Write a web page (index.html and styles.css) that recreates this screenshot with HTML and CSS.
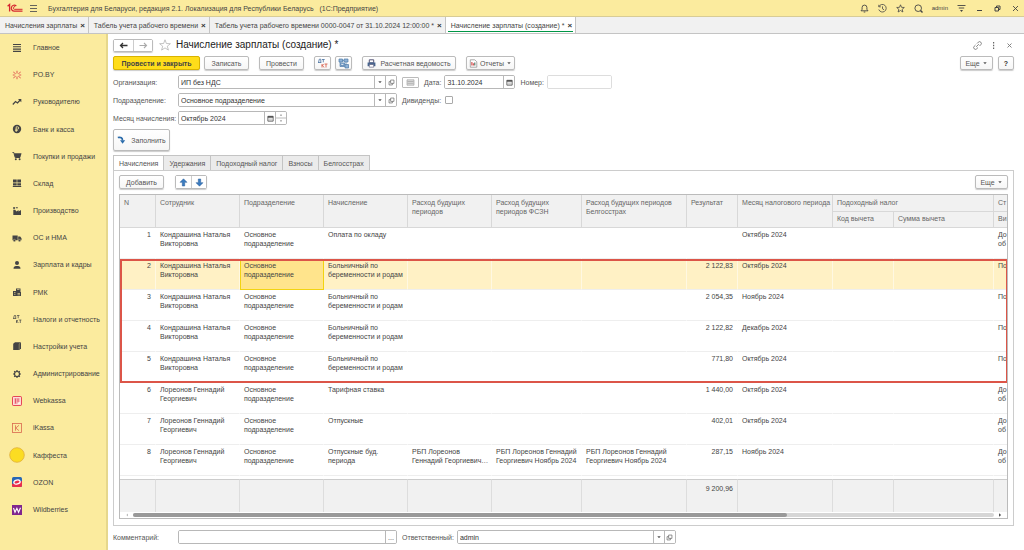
FILE: index.html
```html
<!DOCTYPE html>
<html lang="ru">
<head>
<meta charset="utf-8">
<title>Начисление зарплаты (создание) *</title>
<link rel="stylesheet" href="styles.css">
</head>
<body>
<svg class="sprite" aria-hidden="true">
  <symbol id="calendar" viewBox="0 0 8 8"><path d="M1 1.5h6v5.5H1z" fill="none" stroke="#555"/><path d="M1 1h6v2H1z" fill="#555"/><path d="M2 4.5h4M2 5.7h4" stroke="#999" stroke-width=".6"/></symbol>
  <symbol id="open" viewBox="0 0 8 8"><path d="M3 1.2h3.8V5H3zM3 3H1.2v3.8H5V5" fill="none" stroke="#666" stroke-width=".8"/></symbol>
  <symbol id="down" viewBox="0 0 6 6"><path d="M1.3 2.2h3.4L3 4.2z" fill="#555"/></symbol>
</svg>

<header class="titlebar">
  <svg class="logo" viewBox="0 0 16 10" fill="none" stroke="#d5262f"><path d="M.6 3.2 2.6 1.5V8.500" stroke-width="1.300"/><path d="M9.300 3A3 3 0 1 0 7.300 8.200H15.500" stroke-width="1.200"/><path d="M8 3.700A1.300 1.300 0 1 0 7.300 6.300H15.500" stroke-width="1"/></svg>
  <button class="bare" aria-label="Меню"><svg class="i9" viewBox="0 0 9 9"><path d="M1 1.500h7M1 4.500h7M1 7.500h7" stroke="#555" stroke-width=".9"/></svg></button>
  <span class="app-name">Бухгалтерия для Беларуси, редакция 2.1. Локализация для Республики Беларусь &nbsp; (1С:Предприятие)</span>
  <div class="sysicons">
    <button class="bare" aria-label="Уведомления"><svg class="i9" viewBox="0 0 9 9" fill="none" stroke="#444" stroke-width=".9"><path d="M1 6.800h7L6.900 5.300V3.500a2.400 2.400 0 0 0-4.800 0v1.800zM3.700 8h1.600"/></svg></button>
    <button class="bare" aria-label="История"><svg class="i9" viewBox="0 0 9 9" fill="none" stroke="#444" stroke-width=".8"><path d="M1 2.500A3.800 3.800 0 1 1 .8 5.500M.8.800v2h2M4.500 2.400v2.400L6 5.800"/></svg></button>
    <button class="bare" aria-label="Избранное"><svg class="i9" viewBox="0 0 9 9" fill="none" stroke="#444" stroke-width=".8"><path d="m4.500.800 1 2.500 2.800.200-2.100 1.800.700 2.700-2.400-1.500L2.100 8l.700-2.700L.700 3.500l2.800-.200z"/></svg></button>
    <button class="bare" aria-label="Поиск"><svg class="i9" viewBox="0 0 9 9" fill="none" stroke="#444" stroke-width=".9"><circle cx="4.200" cy="4.200" r="3.300"/><path d="m6.500 6.500 2 2" stroke-width="1.400"/></svg></button>
    <span class="user">admin</span>
    <button class="bare" aria-label="Настройки"><svg class="i9" viewBox="0 0 9 9"><path d="M.5 1.500h8M1.800 4h5.400" stroke="#444" stroke-width=".9"/><path d="M3 6h3L4.500 8z" fill="#444"/></svg></button>
    <button class="bare win" aria-label="Свернуть"><svg class="i7" viewBox="0 0 7 7"><path d="M1 5.500h5" stroke="#444"/></svg></button>
    <button class="bare win" aria-label="Развернуть"><svg class="i7" viewBox="0 0 7 7" fill="none" stroke="#444"><path d="M1 2.500h3.500V6H1zM2.500 2.500V1H6v3.500H4.500"/></svg></button>
    <button class="bare win" aria-label="Закрыть"><svg class="i7" viewBox="0 0 7 7"><path d="m1 1 5 5M6 1 1 6" stroke="#444" stroke-width=".9"/></svg></button>
  </div>
</header>

<nav class="windows">
  <a class="wtab" href="#">Начисления зарплаты<b>×</b></a>
  <a class="wtab" href="#">Табель учета рабочего времени<b>×</b></a>
  <a class="wtab" href="#">Табель учета рабочего времени 0000-0047 от 31.10.2024 12:00:00 *<b>×</b></a>
  <a class="wtab current" href="#">Начисление зарплаты (создание) *<b>×</b></a>
</nav>

<div class="workspace">
<nav class="sidebar">
  <a href="#"><svg viewBox="0 0 10 10"><path d="M1 1.500h8M1 3.800h8M1 6.100h8M1 8.400h8" stroke="#444" stroke-width="1.100"/></svg>Главное</a>
  <a href="#"><svg viewBox="0 0 10 10"><path d="M5 .8v2.700M5 6.500v2.700M1.300 2l2.400 1.800M8.700 2 6.300 3.800M1.300 8l2.400-1.800M8.700 8 6.300 6.200M.8 5h2M7.200 5h2" stroke="#dc4b4b" stroke-width=".9"/></svg>PO.BY</a>
  <a href="#"><svg viewBox="0 0 10 10"><path d="m.8 7.500 2.700-3 2 1.500 2.700-3" fill="none" stroke="#444" stroke-width="1.200"/><path d="M6 2h3.300v3.300z" fill="#444"/></svg>Руководителю</a>
  <a href="#"><svg viewBox="0 0 10 10"><circle cx="5" cy="5" r="4.200" fill="#444"/><path d="M4.200 8V2.800h1.300a1.200 1.200 0 0 1 0 2.400H3.200M3.200 6.500h2.500" fill="none" stroke="#fbeb9e" stroke-width=".8"/></svg>Банк и касса</a>
  <a href="#"><svg viewBox="0 0 10 10"><path d="M.5 1.500h1.300L3.200 6.500h5" fill="none" stroke="#444"/><path d="M2.200 2.200h7.300L8.500 6H3.200z" fill="#444"/><circle cx="3.800" cy="8.300" r="1" fill="#444"/><circle cx="7.600" cy="8.300" r="1" fill="#444"/></svg>Покупки и продажи</a>
  <a href="#"><svg viewBox="0 0 10 10" fill="#444"><path d="M1 1.500h3.700v3H1zM5.300 1.500H9v3H5.300zM1 5.200h3.700v2.300H1zM5.300 5.200H9v2.300H5.300zM.8 8h8.400v.900H.8z"/></svg>Склад</a>
  <a href="#"><svg viewBox="0 0 10 10" fill="#444"><path d="M1.300 9V3.800h1.800L4.500 5.500 6.500 4v1.500L9 4v5zM1.300 1h1.500v2H1.300zM3.800 1.200h2v1h-2z"/></svg>Производство</a>
  <a href="#"><svg viewBox="0 0 10 10" fill="#444"><path d="M.5 2.500h5.200v4.700H.5zM6.200 3.500h2L9.500 5.300v1.900H6.200z"/><circle cx="2.400" cy="7.500" r="1.200" stroke="#fbeb9e" stroke-width=".4"/><circle cx="7.500" cy="7.500" r="1.200" stroke="#fbeb9e" stroke-width=".4"/></svg>ОС и НМА</a>
  <a href="#"><svg viewBox="0 0 10 10" fill="#444"><circle cx="5" cy="3" r="2"/><path d="M1.500 8.800c0-2 1-2.800 2.500-2.800h2c1.500 0 2.500.800 2.500 2.800z"/></svg>Зарплата и кадры</a>
  <a href="#"><svg viewBox="0 0 10 10"><path d="M1 4h3.500v5H1zM4.500 5H9v4H4.500zM4 1.500h4.500V5H4z" fill="#444"/><path d="M5 2.500h2.500M2 5.500h1.500M2 7.300h1.500M5.500 6.500H8M5.500 7.800H8" stroke="#fbeb9e" stroke-width=".6"/></svg>РМК</a>
  <a href="#"><svg viewBox="0 0 10 10" fill="none" stroke="#444" stroke-width=".7"><path d="M1 4.500h3.200M1.500 4.500 2.300 1.500h1.400v3M5 1.500h2.500M6.200 1.500v2.800M4.500 6v3M4.500 7.500 6.200 6M5 7.200 6.300 9M7.200 6h2.200M8.300 6v3"/></svg>Налоги и отчетность</a>
  <a href="#"><svg viewBox="0 0 10 10"><path d="M1.200 2.800 3 1.200h6v6L7.500 8.900H1.200z" fill="#444"/><path d="M7.200 8.900V2.900L8.900 1.300" fill="none" stroke="#c9bd85" stroke-width=".5"/></svg>Настройки учета</a>
  <a href="#"><svg viewBox="0 0 10 10" fill="none" stroke="#444"><circle cx="5" cy="5" r="2.500" stroke-width="1.200"/><path d="M5 1v1.500M5 7.500V9M1 5h1.500M7.500 5H9M2.200 2.200l1 1M6.800 6.800l1 1M7.800 2.200l-1 1M3.200 6.800l-1 1" stroke-width="1.200"/></svg>Администрирование</a>
  <a href="#"><svg viewBox="0 0 10 10" fill="none" stroke="#e3344b"><rect x=".6" y=".6" width="8.800" height="8.800" rx=".6" fill="#fff0e8"/><path d="M2.200 3h5.600M2.200 5h5.600M2.200 7h3.500M3.500 2.500v5M6 2.500v4" stroke-width=".7"/></svg>Webkassa</a>
  <a href="#"><svg viewBox="0 0 10 10" fill="none" stroke="#d9694f" stroke-width=".8"><rect x=".5" y=".5" width="9" height="9"/><path d="M3.500 2.300v5.400M7 2.300 3.800 5 7 7.700"/></svg>iKassa</a>
  <a href="#"><svg class="coin" viewBox="0 0 16 16"><circle cx="8" cy="8" r="7.300" fill="#fbdc22" stroke="#e0ae3c" stroke-width=".8"/></svg>Каффеста</a>
  <a href="#"><svg viewBox="0 0 10 10"><rect width="10" height="10" rx="1.500" fill="#2767b5"/><path d="M0 7 10 4v4.500Q10 10 8.500 10h-7Q0 10 0 8.500z" fill="#e92e4c"/><ellipse cx="5" cy="5" rx="3.200" ry="2" fill="#e92e4c" stroke="#fff" stroke-width="1.300" transform="rotate(-15 5 5)"/></svg>OZON</a>
  <a href="#"><svg viewBox="0 0 10 10"><rect width="10" height="10" fill="#80268e"/><path d="M1.500 3 3 7.300 4.900 3.300 6.600 7.300 8.500 2.700" fill="none" stroke="#fff" stroke-width="1.100"/></svg>Wildberries</a>
</nav>

<main class="doc">
  <div class="heading">
    <div class="joined">
      <button aria-label="Назад"><svg class="i9" viewBox="0 0 9 9"><path d="M8.500 4.500h-7M4 2 1.500 4.500 4 7" fill="none" stroke="#333" stroke-width="1.300"/></svg></button><button aria-label="Вперед"><svg class="i9" viewBox="0 0 9 9"><path d="M.5 4.500h7M5 2l2.500 2.500L5 7" fill="none" stroke="#aaa" stroke-width="1.100"/></svg></button>
    </div>
    <svg class="star" viewBox="0 0 12 12"><path d="m6 .8 1.400 3.700 4 .200-3.100 2.500 1.100 3.900L6 8.900l-3.400 2.200 1.100-3.900L.6 4.700l4-.200z" fill="none" stroke="#aaa" stroke-width=".7"/></svg>
    <h1>Начисление зарплаты (создание) *</h1>
    <div class="heading-tools">
      <button class="bare" aria-label="Ссылка"><svg class="i9" viewBox="0 0 9 9" fill="none" stroke="#777" stroke-width=".9"><path d="M4 2.500 5.300 1.200a1.700 1.700 0 0 1 2.500 2.500L6.500 5M5 6.500 3.700 7.800a1.700 1.700 0 0 1-2.500-2.500L2.500 4M3.200 5.800 5.800 3.200"/></svg></button>
      <button class="bare" aria-label="Еще"><svg class="i9" viewBox="0 0 9 9" fill="#666"><path d="M4 1h1.200v1.500H4zM4 3.800h1.200v1.500H4zM4 6.500h1.200V8H4z"/></svg></button>
      <button class="bare" aria-label="Закрыть"><svg class="i9" viewBox="0 0 9 9"><path d="m2.500 2.500 4 4M6.500 2.500l-4 4" stroke="#777" stroke-width=".9"/></svg></button>
    </div>
  </div>

  <div class="toolbar">
    <button class="btn primary">Провести и закрыть</button>
    <button class="btn save">Записать</button>
    <button class="btn post">Провести</button>
    <button class="btn icon" aria-label="Проводки"><svg class="i11" viewBox="0 0 11 11" fill="none" stroke-width=".8"><path d="M1 4.500h3.300M1.500 4.500 2.300 1.200h1.500v3.300M5 1.500h2.700M6.300 1.500v2.800" stroke="#456f9e"/><path d="M5 6v3.500M5 7.800 6.700 6M5.500 7.300 7 9.500M7.500 6h3M9 6v3.500" stroke="#d65543"/></svg></button>
    <button class="btn icon" aria-label="Структура"><svg class="i11" viewBox="0 0 11 11" fill="#8fb2d6" stroke="#4e7bab" stroke-width=".7"><path d="M1 1h3.500v3H1zM6 1h4v3H6zM3 5h3.500v2.500H3zM7 6.500h3.500V10H7zM2 4v4.500h5M4.500 2.500H6M8 4v2.500"/></svg></button>
    <button class="btn sheet"><svg class="i9" viewBox="0 0 9 9"><path d="M2.300.8h4.400v3H2.300z" fill="#fff" stroke="#557"/><path d="M.6 3.500h7.800v3.700H.6z" fill="#47658e"/><path d="M2.300 5.500h4.400v2.700H2.300z" fill="#fff" stroke="#557" stroke-width=".6"/></svg>Расчетная ведомость</button>
    <button class="btn reports"><svg class="i9" viewBox="0 0 9 9"><path d="M1.300.8h4.500l2 2v5.400H1.300z" fill="#fff" stroke="#888" stroke-width=".7"/><path d="M2.900 3v3.500M4.300 4.300v2.200" stroke="#c33"/><path d="M5.800 3.500v3" stroke="#365"/></svg>Отчеты<svg class="i6"><use href="#down"/></svg></button>
    <button class="btn more">Еще<svg class="i6"><use href="#down"/></svg></button>
    <button class="btn help">?</button>
  </div>

  <div class="row">
    <label class="lbl" for="org">Организация:</label>
    <div class="field wide"><input id="org" value="ИП без НДС"><button aria-label="Выбрать"><svg class="i6"><use href="#down"/></svg></button><button aria-label="Открыть"><svg class="i7"><use href="#open"/></svg></button></div>
    <button class="list" aria-label="Список"><svg class="i9" viewBox="0 0 9 9"><path d="M1 1.800h7v5.400H1z" fill="#ddd" stroke="#999" stroke-width=".6"/><path d="M1.500 3.500h6M1.500 5.300h6" stroke="#999" stroke-width=".6"/></svg></button>
    <label for="date">Дата:</label>
    <div class="field date"><input id="date" value="31.10.2024"><button aria-label="Календарь"><svg class="i7"><use href="#calendar"/></svg></button></div>
    <label for="num">Номер:</label>
    <div class="field num"><input id="num"></div>
  </div>
  <div class="row">
    <label class="lbl" for="dep">Подразделение:</label>
    <div class="field wide"><input id="dep" value="Основное подразделение"><button aria-label="Выбрать"><svg class="i6"><use href="#down"/></svg></button><button aria-label="Открыть"><svg class="i7"><use href="#open"/></svg></button></div>
    <label class="check">Дивиденды:<input type="checkbox"></label>
  </div>
  <div class="row">
    <label class="lbl" for="month">Месяц начисления:</label>
    <div class="field month"><input id="month" value="Октябрь 2024"><button aria-label="Календарь"><svg class="i7"><use href="#calendar"/></svg></button><button aria-label="Изменить месяц"><svg class="spin" viewBox="0 0 10 12"><path d="M0 6h10" stroke="#bbb"/><path d="M4 3.500h2L5 2.300zM4 8.500h2L5 9.700z" fill="#555"/></svg></button></div>
  </div>

  <button class="btn fill"><svg class="i9" viewBox="0 0 9 9"><path d="M.8 1.500C4 .8 5.500 2 5.500 4.500" fill="none" stroke="#2b6cab" stroke-width="1.700"/><path d="M3 4.200h5.200L5.600 7.800z" fill="#2b6cab"/></svg>Заполнить</button>

  <div class="tabs" role="tablist">
    <button role="tab" aria-selected="true">Начисления</button><button role="tab">Удержания</button><button role="tab">Подоходный налог</button><button role="tab">Взносы</button><button role="tab">Белгосстрах</button>
  </div>

  <section class="panel">
    <div class="panel-tools">
      <button class="btn add">Добавить</button>
      <div class="joined small">
        <button aria-label="Вверх"><svg class="i9" viewBox="0 0 9 9"><path d="m4.500.8 3.500 3.500H5.700V8H3.300V4.300H1z" fill="#3b7cc0" stroke="#285d98" stroke-width=".5"/></svg></button><button aria-label="Вниз"><svg class="i9" viewBox="0 0 9 9"><path d="M4.500 8.200 1 4.700h2.300V1h2.400v3.700H8z" fill="#3b7cc0" stroke="#285d98" stroke-width=".5"/></svg></button>
      </div>
      <button class="btn more">Еще<svg class="i6"><use href="#down"/></svg></button>
    </div>

    <div class="grid">
    <table>
      <colgroup><col class="c-n"><col class="c-emp"><col class="c-emp"><col class="c-emp"><col class="c-exp"><col class="c-fund"><col class="c-ins"><col class="c-res"><col class="c-month"><col class="c-code"><col class="c-sum"><col class="c-last"></colgroup>
      <thead>
        <tr><th rowspan="2">N</th><th rowspan="2">Сотрудник</th><th rowspan="2">Подразделение</th><th rowspan="2">Начисление</th><th rowspan="2">Расход будущих периодов</th><th rowspan="2">Расход будущих периодов ФСЗН</th><th rowspan="2">Расход будущих периодов Белгосстрах</th><th rowspan="2">Результат</th><th rowspan="2" class="one">Месяц налогового периода</th><th colspan="2">Подоходный налог</th><th>Ст</th></tr>
        <tr><th>Код вычета</th><th>Сумма вычета</th><th>Ви</th></tr>
      </thead>
      <tbody>
        <tr><td>1</td><td>Кондрашина Наталья Викторовна</td><td>Основное подразделение</td><td>Оплата по окладу</td><td></td><td></td><td></td><td></td><td>Октябрь 2024</td><td></td><td></td><td>До<br>об</td></tr>
      </tbody>
      <tbody class="marked">
        <tr class="active"><td>2</td><td>Кондрашина Наталья Викторовна</td><td class="cell">Основное подразделение</td><td>Больничный по беременности и родам</td><td></td><td></td><td></td><td>2 122,83</td><td>Октябрь 2024</td><td></td><td></td><td>По</td></tr>
        <tr><td>3</td><td>Кондрашина Наталья Викторовна</td><td>Основное подразделение</td><td>Больничный по беременности и родам</td><td></td><td></td><td></td><td>2 054,35</td><td>Ноябрь 2024</td><td></td><td></td><td>По</td></tr>
        <tr><td>4</td><td>Кондрашина Наталья Викторовна</td><td>Основное подразделение</td><td>Больничный по беременности и родам</td><td></td><td></td><td></td><td>2 122,82</td><td>Декабрь 2024</td><td></td><td></td><td>По</td></tr>
        <tr><td>5</td><td>Кондрашина Наталья Викторовна</td><td>Основное подразделение</td><td>Больничный по беременности и родам</td><td></td><td></td><td></td><td>771,80</td><td>Октябрь 2024</td><td></td><td></td><td>По</td></tr>
      </tbody>
      <tbody>
        <tr><td>6</td><td>Лореонов Геннадий Георгиевич</td><td>Основное подразделение</td><td>Тарифная ставка</td><td></td><td></td><td></td><td>1 440,00</td><td>Октябрь 2024</td><td></td><td></td><td>До<br>об</td></tr>
        <tr><td>7</td><td>Лореонов Геннадий Георгиевич</td><td>Основное подразделение</td><td>Отпускные</td><td></td><td></td><td></td><td>402,01</td><td>Октябрь 2024</td><td></td><td></td><td>До<br>об</td></tr>
        <tr><td>8</td><td>Лореонов Геннадий Георгиевич</td><td>Основное подразделение</td><td>Отпускные буд.<br>периода</td><td>РБП Лореонов<br>Геннадий Георгиевич…</td><td>РБП Лореонов Геннадий Георгиевич Ноябрь 2024</td><td>РБП Лореонов Геннадий<br>Георгиевич Ноябрь 2024</td><td>287,15</td><td>Ноябрь 2024</td><td></td><td></td><td>До<br>об</td></tr>
        <tr class="spacer"><td colspan="12"></td></tr>
      </tbody>
      <tfoot>
        <tr><td></td><td></td><td></td><td></td><td></td><td></td><td></td><td>9 200,96</td><td></td><td></td><td></td><td></td></tr>
      </tfoot>
    </table>
    <div class="hscroll"><svg class="i6" viewBox="0 0 6 6"><path d="M4 1.500v3L2.300 3z" fill="#bbb"/></svg><div class="track"><div class="thumb"></div></div><svg class="i6" viewBox="0 0 6 6"><path d="M2 1.200v3.600L4.200 3z" fill="#555"/></svg></div>
    </div>
  </section>

  <div class="row bottom">
    <label class="lbl" for="comment">Комментарий:</label>
    <div class="field wide"><input id="comment"><button aria-label="Открыть комментарий">...</button></div>
    <label for="resp">Ответственный:</label>
    <div class="field wide"><input id="resp" value="admin"><button aria-label="Выбрать"><svg class="i6"><use href="#down"/></svg></button><button aria-label="Открыть"><svg class="i7"><use href="#open"/></svg></button></div>
  </div>
</main>
</div>
</body>
</html>
```

FILE: styles.css
```css
* { box-sizing: border-box; }

body {
  margin: 0;
  min-height: 100vh;
  display: flex;
  flex-direction: column;
  font: 7px/9px "Liberation Sans", Arial, sans-serif;
  color: #444;
  background: #fff;
}

button, input { font: inherit; color: inherit; margin: 0; padding: 0; }
button { display: inline-flex; align-items: center; justify-content: center; background: #fff; border: 0; white-space: nowrap; }
a { color: inherit; text-decoration: none; }
svg { display: block; flex: none; }
label { color: #555; white-space: nowrap; }
.sprite { display: none; }
.i6 { width: 6px; height: 6px; }
.i7 { width: 7px; height: 7px; }
.i9 { width: 9px; height: 9px; }
.i11 { width: 11px; height: 11px; }
.bare { background: none; }

/* Title bar */
.titlebar { height: 17px; flex: none; display: flex; align-items: center; padding: 0 4px 0 7px; background: #fbeb9e; border-bottom: 1px solid #d8cc96; }
.logo { width: 16px; height: 10px; margin-right: 6px; }
.app-name { margin-left: 10px; }
.sysicons { margin-left: auto; display: flex; align-items: center; gap: 9px; }
.user { font-size: 6px; }
.win { width: 9px; }

/* Open windows */
.windows { height: 17px; flex: none; display: flex; background: #f1f1f1; border-bottom: 1px solid #c4c4c4; }
.wtab { display: flex; align-items: center; gap: 3px; padding: 0 3px 0 5px; border-right: 1px solid #c4c4c4; white-space: nowrap; }
.wtab b { font-size: 8px; color: #333; }
.wtab.current { background: linear-gradient(#009646, #009646) center bottom 1px / calc(100% - 4px) 1px no-repeat #fff; }

.workspace { flex: 1; display: flex; }

/* Sections */
.sidebar { width: 108px; flex: none; display: flex; flex-direction: column; padding: 0 0 28px; background: #fbeb9e; border-right: 2px solid #e6d78c; }
.sidebar a { flex: 1; display: grid; grid-template-columns: 33px 1fr; align-items: center; white-space: nowrap; }
.sidebar a svg { width: 10px; height: 10px; justify-self: center; }
.sidebar a .coin { width: 16px; height: 16px; }

/* Document form */
.doc { flex: 1; min-width: 0; display: flex; flex-direction: column; padding: 4px 10px 7px 5px; }
.heading { display: flex; align-items: center; height: 14px; }
.joined { display: flex; height: 13px; border: 1px solid #bbb; border-radius: 2px; box-shadow: 0 1px 1px #ccc; }
.joined button { width: 19px; }
.joined button + button { border-left: 1px solid #ccc; }
.joined.small { height: 14px; }
.joined.small button { width: 15px; }
.star { width: 12px; height: 12px; margin: 0 5px 0 6px; }
h1 { margin: 0; font-size: 10px; line-height: 14px; font-weight: 400; color: #222; }
.heading-tools { margin-left: auto; display: flex; gap: 7px; }

.btn { height: 14px; gap: 4px; border: 1px solid #bbb; border-radius: 2px; background: linear-gradient(#fff, #f6f6f6); box-shadow: 0 1px 1px #ccc; color: #555; }
.toolbar { display: flex; margin: 4px 0 5px; }
.primary { width: 87px; margin-right: 4px; background: #ffdd1a; border-color: #d9b300; color: #444; font-weight: 700; }
.save { width: 45px; margin-right: 10px; }
.post { width: 45px; margin-right: 10px; }
.icon { width: 17px; margin-right: 4px; }
.sheet { width: 94px; margin: 0 10px 0 6px; }
.reports { width: 49px; gap: 2px; }
.more { width: 33px; gap: 2px; margin-left: auto; }
.help { width: 16px; margin-left: 5px; font-weight: 700; color: #333; }
.fill { width: 57px; height: 22px; gap: 5px; }

.row { display: flex; align-items: center; gap: 3px; height: 14px; margin-bottom: 4px; }
.lbl { width: 62px; }
.field { display: flex; height: 14px; margin-right: 2px; border: 1px solid #b8b8b8; border-radius: 2px; overflow: hidden; }
.field input { flex: 1; min-width: 0; border: 0; outline: 0; padding: 0 2px; background: #fff; color: #333; }
.field button { width: 11px; border-left: 1px solid #b8b8b8; }
.wide { width: 219px; }
.date { width: 71px; }
.num { width: 65px; border-color: #ddd; }
.month { width: 109px; }
.spin { width: 10px; height: 12px; }
.list { width: 17px; height: 11px; margin-right: 2px; border: 1px solid #bbb; border-radius: 1px; }
.check { display: flex; align-items: center; gap: 4px; }
.check input { appearance: none; width: 8px; height: 8px; margin: 0; border: 1px solid #aaa; border-radius: 1px; background: #fff; }

.tabs { display: flex; margin-top: 4px; }
.tabs button { height: 15px; padding: 0 5px; background: #ebebeb; border: 1px solid #c4c4c4; border-left: 0; border-bottom: 0; color: #555; }
.tabs button:first-child { border-left: 1px solid #c4c4c4; background: #fff; }

.panel { flex: 1; display: flex; flex-direction: column; padding: 4px 5px 6px; border: 1px solid #ccc; }
.panel-tools { display: flex; margin-bottom: 5px; }
.add { width: 45px; margin-right: 11px; }

/* Accruals table */
.grid { flex: 1; display: flex; flex-direction: column; border: 1px solid #bbb; overflow: hidden; }
table { width: 100%; table-layout: fixed; border-collapse: separate; border-spacing: 0; }
.c-n { width: 36px; }
.c-emp { width: 84px; }
.c-exp { width: 84px; }
.c-fund { width: 90px; }
.c-ins { width: 105px; }
.c-res { width: 51px; }
.c-month { width: 95px; }
.c-code { width: 61px; }
.c-sum { width: 100px; }
.c-last { width: 14px; }
th, td { padding: 3px 4px 0; text-align: left; vertical-align: top; font-weight: 400; border-right: 1px solid #f2f2f2; border-bottom: 1px solid #eee; }
td { padding-top: 2px; }
th:last-child, td:last-child { padding-right: 0; border-right: 0; }
th { height: 17px; background: #f1f1f1; color: #666; border-color: #d8d8d8; }
thead tr + tr th { height: 16px; padding-top: 2px; }
.one { white-space: nowrap; padding-right: 0; }
tbody td { height: 31px; border-right-color: transparent; }
td:nth-child(5), td:nth-child(6) { padding-right: 0; }
td:nth-child(5) { white-space: nowrap; }
td:nth-child(8), tbody td:first-child:not([colspan]) { text-align: right; }
.marked { outline: 2px solid #dc5548; outline-offset: -2px; }
.active td { background: #fff1c5; border-right-color: #fff8e2; }
.active .cell { background: #ffe48c; outline: 1px solid #f2d311; outline-offset: -1px; }
.spacer td { height: 3px; padding: 0; border: 0; }
tfoot td { height: 33px; padding-top: 4px; background: #f1f1f1; border-right-color: #ddd; border-top: 1px solid #ccc; border-bottom: 0; }

.hscroll { flex: 1; display: flex; align-items: center; gap: 3px; padding: 0 4px; }
.track { flex: 1; height: 4px; border-radius: 2px; background: #d6d6d6; }
.thumb { width: 76%; height: 4px; border-radius: 2px; background: #999; }

.bottom { margin: 4px 0 0; }
```
